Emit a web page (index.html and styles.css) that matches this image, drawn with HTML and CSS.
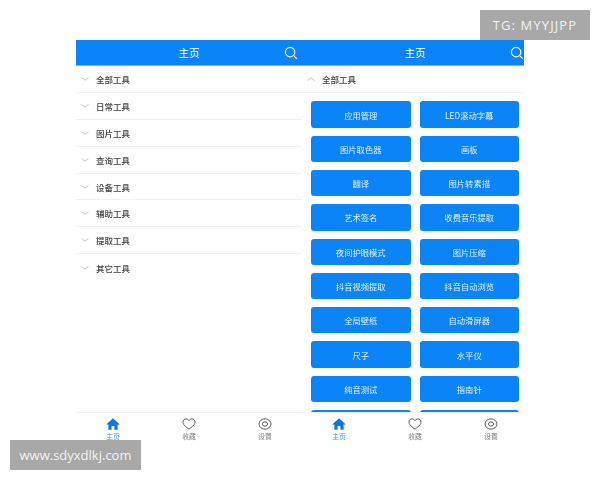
FILE: index.html

```html
<!DOCTYPE html>
<html lang="zh">
<head>
<meta charset="utf-8"/>
<meta content="width=device-width, initial-scale=1.0" name="viewport"/>
<title>主页</title>
<link rel="stylesheet" href="styles.css">
</head>
<body>
<div class="stage">

  <div class="phone">
    <div class="header">
      <span class="title">主页</span>
      <svg class="search" viewBox="0 0 16 16"><circle cx="7" cy="7" r="5.4"/><path d="M11 11l3.6 3.4"/></svg>
    </div>
    <div class="content">
      <div class="row"><svg class="chev" viewBox="0 0 8 4"><path d="M.5.5L4 3.2 7.5.5"/></svg>全部工具</div>
      <div class="row"><svg class="chev" viewBox="0 0 8 4"><path d="M.5.5L4 3.2 7.5.5"/></svg>日常工具</div>
      <div class="row"><svg class="chev" viewBox="0 0 8 4"><path d="M.5.5L4 3.2 7.5.5"/></svg>图片工具</div>
      <div class="row"><svg class="chev" viewBox="0 0 8 4"><path d="M.5.5L4 3.2 7.5.5"/></svg>查询工具</div>
      <div class="row"><svg class="chev" viewBox="0 0 8 4"><path d="M.5.5L4 3.2 7.5.5"/></svg>设备工具</div>
      <div class="row"><svg class="chev" viewBox="0 0 8 4"><path d="M.5.5L4 3.2 7.5.5"/></svg>辅助工具</div>
      <div class="row"><svg class="chev" viewBox="0 0 8 4"><path d="M.5.5L4 3.2 7.5.5"/></svg>提取工具</div>
      <div class="row no-line"><svg class="chev" viewBox="0 0 8 4"><path d="M.5.5L4 3.2 7.5.5"/></svg>其它工具</div>
    </div>
    <div class="tabs">
      <div class="tab active">
        <svg viewBox="0 0 16 14"><path class="solid" d="M8 .4L.4 7.2l.9 1L2.600 7.100V13.600H6.400V9.400H9.600V13.600H13.400V7.100L14.700 8.200l.9-1z"/></svg>
        <span>主页</span>
      </div>
      <div class="tab">
        <svg viewBox="0 0 16 14"><path d="M8 13C3.500 9.800 1 7.500 1 4.700 1 2.600 2.600 1 4.500 1 5.900 1 7.200 1.800 8 3 8.800 1.800 10.100 1 11.500 1 13.400 1 15 2.600 15 4.700 15 7.500 12.500 9.800 8 13z"/></svg>
        <span>收藏</span>
      </div>
      <div class="tab">
        <svg viewBox="0 0 16 14"><ellipse cx="8" cy="7" rx="7" ry="6"/><ellipse cx="8" cy="7" rx="3" ry="2.500"/></svg>
        <span>设置</span>
      </div>
    </div>
  </div>

  <div class="phone">
    <div class="header">
      <span class="title">主页</span>
      <svg class="search" viewBox="0 0 16 16"><circle cx="7" cy="7" r="5.4"/><path d="M11 11l3.6 3.4"/></svg>
    </div>
    <div class="content">
      <div class="row"><svg class="chev" viewBox="0 0 8 4"><path d="M.5 3.500L4 .8l3.500 2.700"/></svg>全部工具</div>
      <div class="grid">
        <button>应用管理</button>
        <button>LED滚动字幕</button>
        <button>图片取色器</button>
        <button>画板</button>
        <button>翻译</button>
        <button>图片转素描</button>
        <button>艺术签名</button>
        <button>收费音乐提取</button>
        <button>夜间护眼模式</button>
        <button>图片压缩</button>
        <button>抖音视频提取</button>
        <button>抖音自动浏览</button>
        <button>全局壁纸</button>
        <button>自动滑屏器</button>
        <button>尺子</button>
        <button>水平仪</button>
        <button>纯音测试</button>
        <button>指南针</button>
        <button></button>
        <button></button>
      </div>
    </div>
    <div class="tabs">
      <div class="tab active">
        <svg viewBox="0 0 16 14"><path class="solid" d="M8 .4L.4 7.2l.9 1L2.600 7.100V13.600H6.400V9.400H9.600V13.600H13.400V7.100L14.700 8.200l.9-1z"/></svg>
        <span>主页</span>
      </div>
      <div class="tab">
        <svg viewBox="0 0 16 14"><path d="M8 13C3.500 9.800 1 7.500 1 4.700 1 2.600 2.600 1 4.500 1 5.900 1 7.200 1.800 8 3 8.800 1.800 10.100 1 11.500 1 13.400 1 15 2.600 15 4.700 15 7.500 12.500 9.800 8 13z"/></svg>
        <span>收藏</span>
      </div>
      <div class="tab">
        <svg viewBox="0 0 16 14"><ellipse cx="8" cy="7" rx="7" ry="6"/><ellipse cx="8" cy="7" rx="3" ry="2.500"/></svg>
        <span>设置</span>
      </div>
    </div>
  </div>

</div>

<div class="mark mark-top">TG: MYYJJPP</div>
<div class="mark mark-bottom">www.sdyxdlkj.com</div>
</body>
</html>
```

FILE: styles.css

```css
body { margin: 0; background: white; font-family: "Noto Sans CJK SC", "Noto Sans", sans-serif; height: 480px; overflow: hidden; }

.stage { display: flex; width: 448px; height: 405px; margin: 40px 0 0 76px; overflow: hidden; filter: blur(0.35px); }
.phone { flex: 0 0 226px; width: 226px; display: flex; flex-direction: column; }

.header { flex: 0 0 25px; background: #0a84f7; border-bottom: 1px solid #6cc0fb; display: flex; align-items: center; justify-content: center; position: relative; }
.title { color: white; font-size: 10.5px; }
.search { position: absolute; right: 4px; top: 6px; width: 14px; height: 14px; fill: none; stroke: white; stroke-width: 1.3; }

.content { flex: 1; min-height: 0; overflow: hidden; }
.row { height: 26.9px; box-sizing: border-box; display: flex; align-items: center; font-size: 8.5px; font-weight: 500; color: #444; border-bottom: 1px solid #f1f1f1; }
.row.no-line { border-bottom: none; }
.chev { width: 8px; height: 4px; margin: 0 7px 0 5px; fill: none; stroke: #aaa; stroke-width: 0.7; }

.grid { display: grid; grid-template-columns: 99.500px 99.500px; grid-auto-rows: 26.300px; gap: 8px 9px; padding: 8.500px 0 0 9px; }
.grid button { background: #0a84f7; color: #e4f1fd; border: none; border-radius: 3px; font-family: inherit; font-size: 8.300px; padding: 0; }

.tabs { flex: 0 0 32px; display: flex; margin-left: -1px; width: 228px; background: white; border-top: 1px solid #f3f3f3; }
.tab { flex: 1; display: flex; flex-direction: column; align-items: center; padding-top: 5px; font-size: 6.800px; color: #808080; }
.tab svg { width: 14px; height: 12px; fill: none; stroke: #444; stroke-width: 1; }
.tab span { margin-top: 2px; line-height: 9px; }
.tab.active { color: #3a97ee; }
.tab .solid { fill: #0a78e0; stroke: none; }

.mark { position: absolute; height: 30px; line-height: 30px; background: #a8a8a8; color: #f2f2f2; font-family: "Open Sans", sans-serif; font-size: 13px; text-align: center; }
.mark-top { left: 480px; top: 10px; width: 110px; letter-spacing: 1.100px; }
.mark-bottom { left: 10px; top: 440px; width: 131px; }
```
